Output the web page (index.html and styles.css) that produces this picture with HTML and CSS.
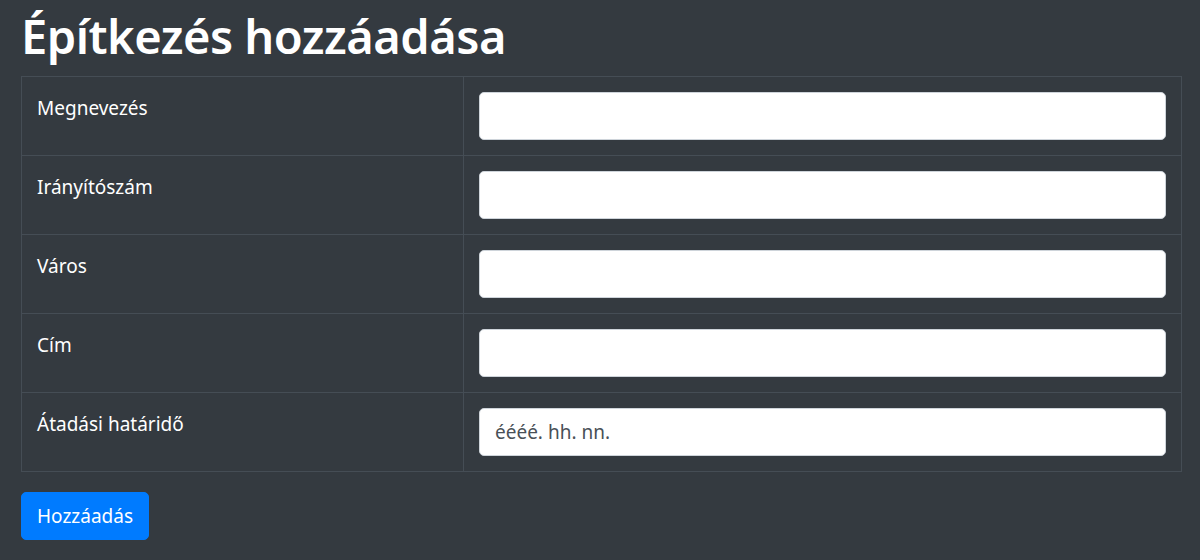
FILE: index.html
```html
<!DOCTYPE html>
<html lang="hu">
<head>
<meta charset="utf-8">
<title>Építkezés hozzáadása</title>
<link rel="stylesheet" href="styles.css">
</head>
<body>
<main class="page">
  <h1 class="title">Építkezés hozzáadása</h1>
  <form class="form">
    <table class="grid">
      <tbody>
        <tr><td class="label">Megnevezés</td><td class="field"><input class="control" type="text"></td></tr>
        <tr><td class="label">Irányítószám</td><td class="field"><input class="control" type="text"></td></tr>
        <tr><td class="label">Város</td><td class="field"><input class="control" type="text"></td></tr>
        <tr><td class="label">Cím</td><td class="field"><input class="control" type="text"></td></tr>
        <tr><td class="label">Átadási határidő</td><td class="field"><input class="control" type="text" placeholder="éééé. hh. nn."></td></tr>
      </tbody>
    </table>
    <button class="btn" type="button">Hozzáadás</button>
  </form>
</main>
</body>
</html>
```

FILE: styles.css
```css
html, body {
  margin: 0;
  padding: 0;
  background: #343a40;
}
body {
  font-family: "Noto Sans", "Open Sans", sans-serif;
  font-size: 20px;
  line-height: 1.5;
  color: #fff;
}
.page {
  padding: 6px 18px 0 21px;
}
.title {
  margin: 0 0 10px 0;
  font-size: 47px;
  line-height: 60px;
  font-weight: 600;
  letter-spacing: -0.5px;
}
.form {
  margin: 0;
}
.grid {
  width: 100%;
  border-collapse: collapse;
  margin-bottom: 20px;
}
.grid td {
  border: 1px solid #454d55;
  padding: 15px;
  vertical-align: top;
}
.label {
  width: 411px;
  font-size: 19px;
  line-height: 32px;
}
.control {
  display: block;
  box-sizing: border-box;
  width: 100%;
  height: 48px;
  margin: 0;
  padding: 7px 15px;
  font-family: inherit;
  font-size: 19px;
  color: #495057;
  background: #fff;
  border: 1px solid #ced4da;
  border-radius: 5px;
  outline: none;
}
.control::placeholder {
  color: #495057;
  opacity: 1;
}
.btn {
  display: block;
  height: 48px;
  padding: 0 15px;
  font-family: inherit;
  font-size: 19px;
  color: #fff;
  background: #007bff;
  border: 1px solid #007bff;
  border-radius: 5px;
}
```
